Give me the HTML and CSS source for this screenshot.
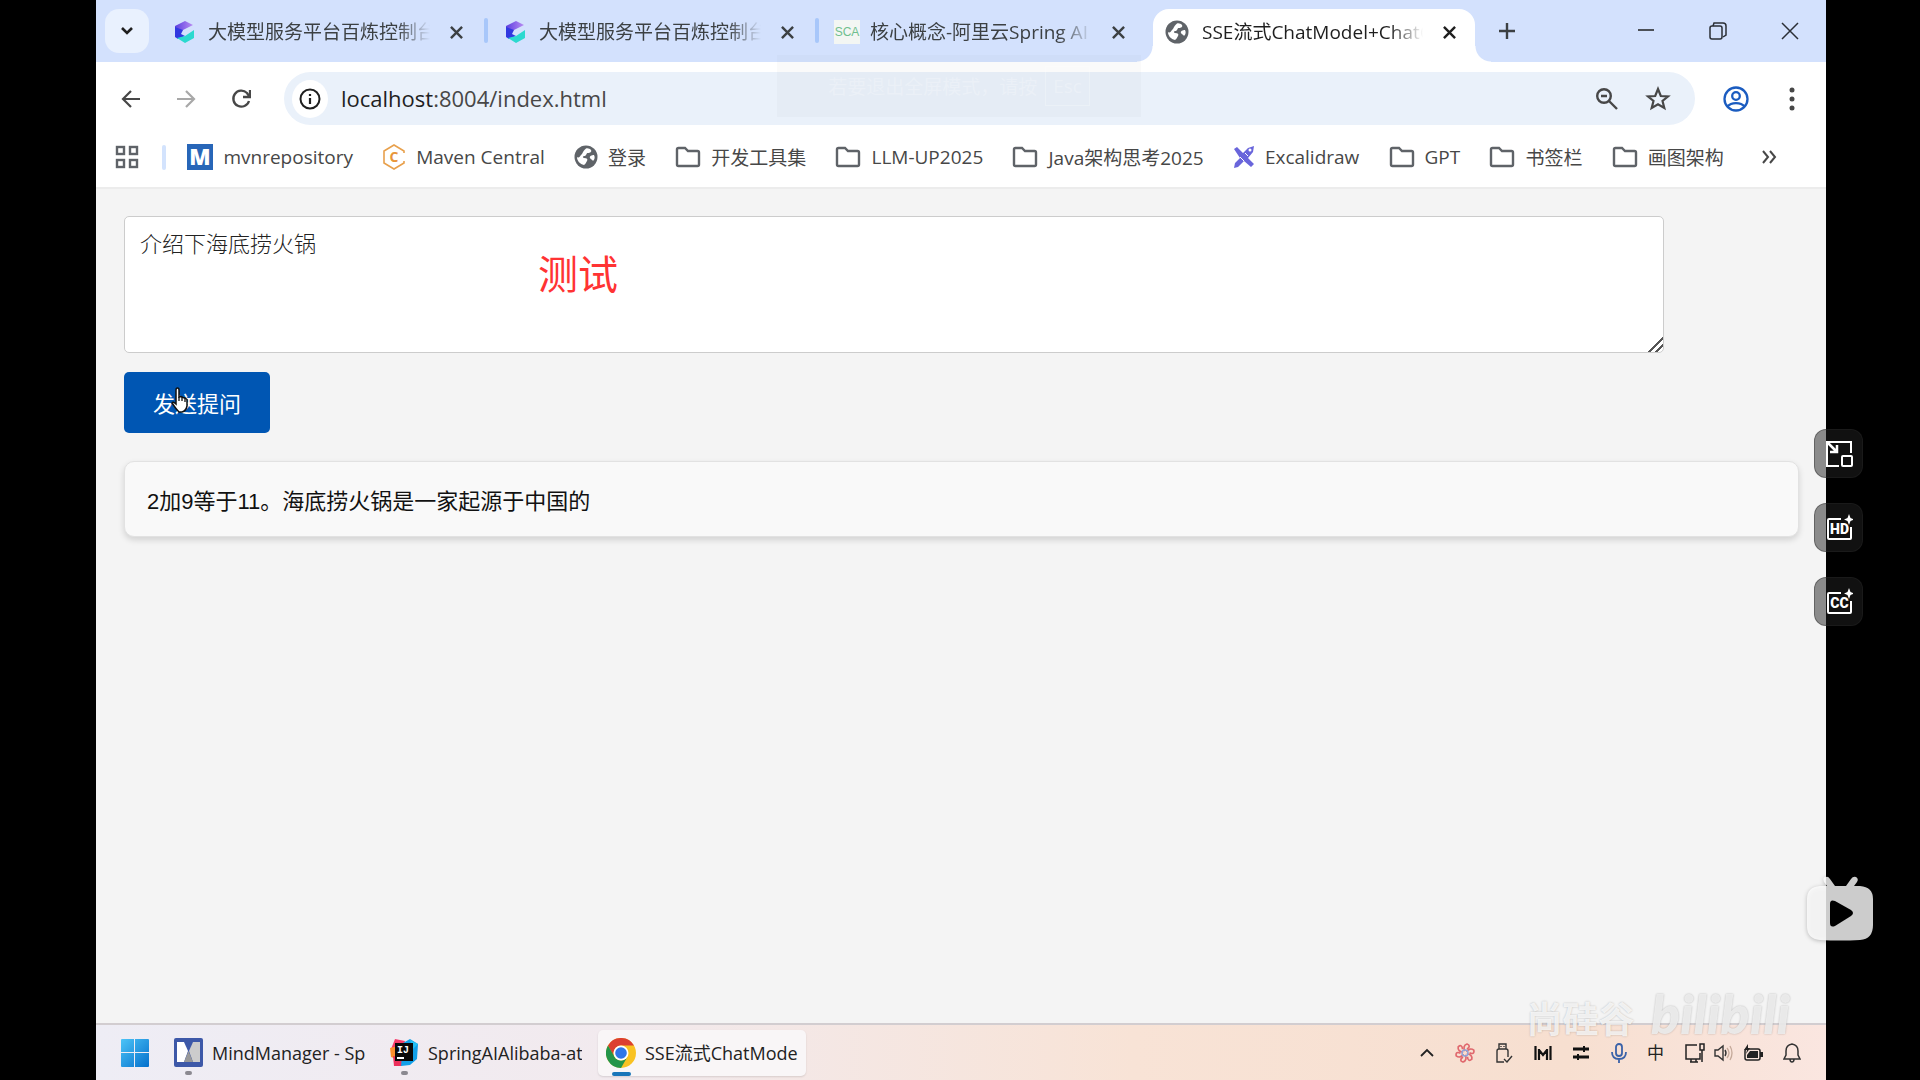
FILE: index.html
```html
<!DOCTYPE html>
<html lang="zh-CN">
<head>
    <meta charset="UTF-8">
    <meta name="viewport" content="width=device-width, initial-scale=1.0">
    <title>SSE流式ChatModel+ChatClient</title>
    <link rel="stylesheet" href="styles.css">
</head>
<body>

    <svg class="defs" aria-hidden="true">
        <defs>
            <linearGradient id="cloudTop" x1="0" y1="0" x2="1" y2="0">
                <stop offset="0" stop-color="#5b3fe0"/>
                <stop offset="1" stop-color="#b98cf2"/>
            </linearGradient>
            <linearGradient id="winBlue" x1="0" y1="0" x2="1" y2="1">
                <stop offset="0" stop-color="#4cc4f7"/>
                <stop offset="1" stop-color="#0470cc"/>
            </linearGradient>
        </defs>
        <symbol id="cloud" viewBox="0 0 20 22">
            <path d="M10 0 18 4 8 9 0 12V5z" fill="url(#cloudTop)"/>
            <path d="M0 6 8 9 6 13 10 15 3 18 0 16z" fill="#3038e0"/>
            <path d="M19 9V17L10 22 2 17 10 15z" fill="#2bd9cf"/>
        </symbol>
        <symbol id="globe" viewBox="0 0 24 24">
            <circle cx="12" cy="12" r="11.500" fill="#5f6368"/>
            <path d="M12 3.500C14 3 16 4 17 5 18 7 16 8 14 8 12 8 13 10 11 11 9 11 8 12 10 13 13 13 14 14 13 16 12 17 12 19 10 20 6 19 3 16 3 12 6 14 6 10 8 9 9 7 10 5 12 3.500z" fill="#fff"/>
            <path d="M20 10C18 10 15 11 16 13 17 15 18 14 19 16 21 14 21 12 20 10z" fill="#fff"/>
        </symbol>
        <symbol id="close" viewBox="0 0 14 14">
            <path d="M1 1 13 13M13 1 1 13" fill="none" stroke="currentColor" stroke-width="2.600"/>
        </symbol>
        <symbol id="folder" viewBox="0 0 26 22">
            <path d="M2 3.500Q2 2 3.500 2H10L13 5H22.500Q24 5 24 6.500V18.500Q24 20 22.500 20H3.500Q2 20 2 18.500z" fill="none" stroke="#5f6368" stroke-width="2.400"/>
        </symbol>
    </svg>

    <div class="screen">

        <header class="tab-strip">
            <button class="tab-search" aria-label="搜索标签页">
                <svg width="14" height="10" viewBox="0 0 14 10"><path d="M2 2 7 7 12 2" fill="none" stroke="#1f1f1f" stroke-width="2.600"/></svg>
            </button>
            <div class="tab">
                <svg class="favicon" width="20" height="22"><use href="#cloud"/></svg>
                <span class="tab-title">大模型服务平台百炼控制台</span>
                <button class="tab-close" aria-label="关闭"><svg width="13" height="13"><use href="#close"/></svg></button>
            </div>
            <div class="tab">
                <svg class="favicon" width="20" height="22"><use href="#cloud"/></svg>
                <span class="tab-title">大模型服务平台百炼控制台</span>
                <button class="tab-close" aria-label="关闭"><svg width="13" height="13"><use href="#close"/></svg></button>
            </div>
            <div class="tab tab-plain">
                <span class="favicon sca">SCA</span>
                <span class="tab-title">核心概念-阿里云Spring AI</span>
                <button class="tab-close" aria-label="关闭"><svg width="13" height="13"><use href="#close"/></svg></button>
            </div>
            <div class="tab tab-active">
                <svg class="favicon" width="24" height="24"><use href="#globe"/></svg>
                <span class="tab-title">SSE流式ChatModel+ChatClient</span>
                <button class="tab-close" aria-label="关闭"><svg width="13" height="13"><use href="#close"/></svg></button>
            </div>
            <button class="new-tab" aria-label="新标签页">
                <svg width="18" height="18" viewBox="0 0 18 18"><path d="M9 1V17M1 9H17" stroke="#3c4043" stroke-width="2.400"/></svg>
            </button>
            <div class="window-controls">
                <button aria-label="最小化"><svg width="18" height="18" viewBox="0 0 18 18"><path d="M1 8H17" stroke="#1f1f1f" stroke-width="1.500"/></svg></button>
                <button aria-label="还原"><svg width="18" height="18" viewBox="0 0 18 18"><g fill="none" stroke="#2b2f36" stroke-width="1.500"><rect x="1" y="4" width="12" height="13" rx="2"/><path d="M4 4 5 1H14Q17 1 17 4V13L14 15"/></g></svg></button>
                <button aria-label="关闭窗口"><svg width="18" height="18" viewBox="0 0 18 18"><path d="M1 1 17 17M17 1 1 17" stroke="#2b2f36" stroke-width="1.500"/></svg></button>
            </div>
        </header>

        <div class="toolbar">
            <button class="nav-button" aria-label="后退"><svg width="20" height="20" viewBox="0 0 20 20"><path d="M19 10H2M10 2 2 10 10 18" fill="none" stroke="#474747" stroke-width="2.200"/></svg></button>
            <button class="nav-button" aria-label="前进"><svg width="20" height="20" viewBox="0 0 20 20"><path d="M1 10H18M10 2 18 10 10 18" fill="none" stroke="#a8a8a8" stroke-width="2.200"/></svg></button>
            <button class="nav-button" aria-label="重新加载"><svg width="20" height="20" viewBox="0 0 20 20"><path d="M18 12A8 8 0 1 1 16 4L18 7" fill="none" stroke="#474747" stroke-width="2.300"/><path d="M19 1V8H12" fill="none" stroke="#474747" stroke-width="2.300"/></svg></button>
            <div class="omnibox">
                <button class="site-info" aria-label="查看网站信息"><svg width="22" height="22" viewBox="0 0 22 22"><circle cx="11" cy="11" r="9.500" fill="none" stroke="#1f1f1f" stroke-width="2"/><path d="M11 10V16M11 6V8" stroke="#1f1f1f" stroke-width="2.200"/></svg></button>
                <a class="url" href="#"><span>localhost</span>:8004/index.html</a>
                <button aria-label="缩放"><svg width="24" height="24" viewBox="0 0 24 24"><g fill="none" stroke="#474747" stroke-width="2.400"><circle cx="9" cy="9" r="6.800"/><path d="M14 14 22 22M6 9H12"/></g></svg></button>
                <button aria-label="为此标签页添加书签"><svg width="26" height="26" viewBox="0 0 26 26"><path d="M13 3 15.800 10 23 10.500 17.500 15 19.300 22 13 18.200 6.700 22 8.500 15 3 10.500 10.200 10z" fill="none" stroke="#474747" stroke-width="2.200"/></svg></button>
            </div>
            <button class="profile" aria-label="个人资料"><svg width="28" height="28" viewBox="0 0 28 28"><g fill="none" stroke="#1b5cc0" stroke-width="2.300"><circle cx="14" cy="14" r="11.500"/><circle cx="14" cy="11" r="3.800"/><path d="M5.500 21.500C9 17 19 17 22.500 21.500"/></g></svg></button>
            <button class="menu" aria-label="菜单"><svg width="6" height="24" viewBox="0 0 6 24"><g fill="#474747"><circle cx="3" cy="3" r="2.500"/><circle cx="3" cy="12" r="2.500"/><circle cx="3" cy="21" r="2.500"/></g></svg></button>
        </div>

        <nav class="bookmarks">
            <button class="apps" aria-label="应用"><svg width="24" height="24" viewBox="0 0 24 24"><g fill="none" stroke="#5f6368" stroke-width="2.400"><rect x="2" y="2" width="7" height="7"/><rect x="15" y="2" width="7" height="7"/><rect x="2" y="15" width="7" height="7"/><rect x="15" y="15" width="7" height="7"/></g></svg></button>
            <span class="divider"></span>
            <a href="#"><svg width="26" height="26" viewBox="0 0 26 26"><rect width="26" height="26" fill="#2866b8"/><text x="13" y="21" class="mvn-letter">M</text></svg>mvnrepository</a>
            <a href="#"><svg width="24" height="26" viewBox="0 0 24 26"><path d="M22 9V7L12 1 2 7V19L12 25 22 19V17" fill="none" stroke="#e8a04c" stroke-width="1.600"/><text x="12" y="18" class="central-letter">C</text></svg>Maven Central</a>
            <a href="#"><svg width="24" height="24"><use href="#globe"/></svg>登录</a>
            <a href="#"><svg width="26" height="22"><use href="#folder"/></svg>开发工具集</a>
            <a href="#"><svg width="26" height="22"><use href="#folder"/></svg>LLM-UP2025</a>
            <a href="#"><svg width="26" height="22"><use href="#folder"/></svg>Java架构思考2025</a>
            <a href="#"><svg width="22" height="22" viewBox="0 0 22 22"><path d="M1 3 4 1 10 7 15 2 21 0 20 6 15 12 21 18 18 21 11 15 5 21 1 22 2 17 7 12z" fill="#6965db"/><circle cx="17" cy="4" r="1.500" fill="#fff"/><path d="M7 11 11 15M12 7 15 10" stroke="#fff" stroke-width="1"/></svg>Excalidraw</a>
            <a href="#"><svg width="26" height="22"><use href="#folder"/></svg>GPT</a>
            <a href="#"><svg width="26" height="22"><use href="#folder"/></svg>书签栏</a>
            <a href="#"><svg width="26" height="22"><use href="#folder"/></svg>画图架构</a>
            <button class="more" aria-label="更多书签"><svg width="16" height="14" viewBox="0 0 16 14"><path d="M2 1 7 7 2 13M9 1 14 7 9 13" fill="none" stroke="#474747" stroke-width="2"/></svg></button>
        </nav>

        <!-- full screen hint, almost faded out -->
        <div class="fullscreen-hint">若要退出全屏模式，请按<kbd>Esc</kbd></div>

        <main class="page">
            <textarea class="question" aria-label="提问">介绍下海底捞火锅</textarea>
            <button class="send-button">发送提问</button>
            <div class="answer">2加9等于11。海底捞火锅是一家起源于中国的</div>

            <span class="danmaku">测试</span>
            <svg class="cursor" width="18" height="26" viewBox="0 0 18 26"><path d="M5 15V3Q5 1 6.500 1 8 1 8 3V10L10 9.500 12 10.500 14 11 16 12.500V19Q15 24 11 25H8Q5 22 1 16 2 14 5 17z" fill="#fff" stroke="#111" stroke-width="1.500"/><path d="M8 10V14M11 10V14M14 11V15" stroke="#111" stroke-width="1.300"/></svg>
        </main>

        <footer class="taskbar">
            <button class="start" aria-label="开始"><svg width="28" height="28" viewBox="0 0 28 28"><path d="M0 1Q0 0 1 0H13V13H0zM14 0H27Q28 0 28 1V13H14zM0 14H13V28H1Q0 28 0 27zM14 14H28V27Q28 28 27 28H14z" fill="url(#winBlue)"/></svg></button>
            <button class="task">
                <svg width="29" height="29" viewBox="0 0 29 29"><rect width="29" height="29" rx="2" fill="#3d58a8"/><path d="M3 4H10L14 13 10 24H3z" fill="#fff"/><path d="M26 4H19L15 13 19 24H26z" fill="#ccc"/><path d="M14.500 13 19 24H10z" fill="#999"/></svg>
                <span class="task-title">MindManager - Sp</span>
            </button>
            <button class="task">
                <svg width="29" height="29" viewBox="0 0 29 29"><path d="M1 11 5 1 15 3 12 15z" fill="#f53d6b"/><path d="M0 10 8 8 9 22 1 19z" fill="#fb8f2e"/><path d="M3 18 12 20 12 28 4 28z" fill="#ec2f5b"/><path d="M13 5 20 1 28 6 27 21 20 27 11 28z" fill="#12a0e8"/><path d="M20 2 28 6 23 11z" fill="#22c0f5"/><rect x="5" y="5" width="18" height="18" fill="#090909"/><text x="7" y="15" class="idea-letter">IJ</text><rect x="7" y="19" width="7" height="2" fill="#fff"/></svg>
                <span class="task-title">SpringAIAlibaba-at</span>
            </button>
            <button class="task task-active">
                <svg width="30" height="30" viewBox="0 0 30 30"><circle cx="15" cy="15" r="15" fill="#f9c222"/><path d="M2 7.500A15 15 0 0 1 28 7.500H15A8 8 0 0 0 8 18.500z" fill="#dc3f31"/><path d="M2 7.500 8.500 18.800A7.500 7.500 0 0 0 21.500 18.800L15 30A15 15 0 0 1 2 7.500z" fill="#24954a"/><circle cx="15" cy="15" r="7.500" fill="#fff"/><circle cx="15" cy="15" r="5.800" fill="#2f76e8"/></svg>
                <span class="task-title">SSE流式ChatMode</span>
            </button>

            <div class="tray">
                <svg width="14" height="20" viewBox="0 0 14 20"><path d="M1 13 7 7 13 13" fill="none" stroke="#222" stroke-width="1.800"/></svg>
                <svg width="20" height="20" viewBox="0 0 20 20"><g fill="none" stroke="#e0696e" stroke-width="1.700"><path id="petal" d="M10 8C8 5 9 2 12 1 15 2 15 4 12 6"/><use href="#petal" transform="rotate(60 10 10)"/><use href="#petal" transform="rotate(120 10 10)"/><use href="#petal" transform="rotate(180 10 10)"/><use href="#petal" transform="rotate(240 10 10)"/><use href="#petal" transform="rotate(300 10 10)"/></g><circle cx="10" cy="10" r="3" fill="none" stroke="#8ea4d8" stroke-width="1.500"/></svg>
                <svg width="18" height="20" viewBox="0 0 18 20"><path d="M4 6V1H11V6M9 19H2V8Q2 6 4 6H11Q13 6 13 8V14M9 16 12 19 17 13M6 3V4M9 3V4" fill="none" stroke="#333" stroke-width="1.400"/></svg>
                <svg width="18" height="16" viewBox="0 0 18 16"><path d="M1.500 1V15M5 4V15M13 4V15M16.500 1V15M5 5 9 10 13 5" fill="none" stroke="#111" stroke-width="2.200"/></svg>
                <svg width="18" height="18" viewBox="0 0 18 18"><path d="M1 5H17M1 13H17" fill="none" stroke="#111" stroke-width="3"/><path d="M12 2V8M6 10V16" stroke="#111" stroke-width="2"/></svg>
                <svg width="16" height="20" viewBox="0 0 16 20"><g fill="none" stroke="#3a62a8" stroke-width="1.800"><rect x="5" y="1" width="6" height="12" rx="3"/><path d="M1 9Q1 16 8 16 15 16 15 9M8 16V20"/></g></svg>
                <span class="ime">中</span>
                <button class="tray-group" aria-label="网络、音量和电池">
                    <svg width="20" height="20" viewBox="0 0 20 20"><path d="M12 2H1V16H15V10M5 19H13M6 16V19M11 16V19M15 1H19V7H15zM17 7V19" fill="none" stroke="#222" stroke-width="1.500"/></svg>
                    <svg width="20" height="20" viewBox="0 0 20 20"><path d="M1 7H4L9 3V17L4 13H1zM11 7Q13 10 11 13" fill="none" stroke="#333" stroke-width="1.400"/><path d="M13 5Q17 10 13 15M16 3Q20 10 16 17" fill="none" stroke="#c4a99a" stroke-width="1.300"/></svg>
                    <svg width="20" height="18" viewBox="0 0 20 18"><rect x="2" y="5" width="15" height="11" rx="2" fill="none" stroke="#222" stroke-width="1.500"/><path d="M7 7H15V14H4V11zM17 8H20V13H17zM5 0 1 6H4L3 10 7 4H5z" fill="#222"/></svg>
                </button>
                <svg width="18" height="20" viewBox="0 0 18 20"><path d="M9 1Q3 2 3 8V12L1 16H17L15 12V8Q15 2 9 1zM7 16Q7 19 9 19 11 19 11 16" fill="none" stroke="#333" stroke-width="1.500"/></svg>
            </div>
        </footer>

        <div class="watermark"><span class="brand">尚硅谷</span><span class="site">bilibili</span></div>
    </div>

    <aside class="player-tools">
        <button aria-label="画中画"><svg width="28" height="28" viewBox="0 0 28 28"><g fill="none" stroke="#fff" stroke-width="2"><path d="M26 13V2H2V26H14"/><rect x="17" y="16" width="10" height="10" rx="1"/><path d="M3 3 11 11M12 5V12H5" stroke-width="2.500"/></g></svg></button>
        <button aria-label="高清"><svg width="28" height="28" viewBox="0 0 28 28"><path d="M16 5H4Q3 5 3 6V24Q3 25 4 25H25Q26 25 26 24V13" fill="none" stroke="#fff" stroke-width="2"/><path d="M24 0 25.500 4 29 5.500 25.500 7 24 11 22.500 7 19 5.500 22.500 4z" fill="#fff"/><text x="14.500" y="20" class="tool-letter">HD</text></svg></button>
        <button aria-label="字幕"><svg width="28" height="28" viewBox="0 0 28 28"><path d="M16 5H4Q3 5 3 6V24Q3 25 4 25H25Q26 25 26 24V13" fill="none" stroke="#fff" stroke-width="2"/><path d="M24 0 25.500 4 29 5.500 25.500 7 24 11 22.500 7 19 5.500 22.500 4z" fill="#fff"/><text x="14.500" y="20" class="tool-letter">CC</text></svg></button>
    </aside>
    <button class="play-button" aria-label="播放">
        <svg width="68" height="66" viewBox="0 0 68 66"><path d="M18 6Q16 1 20 1 22 0 24 3L29 10H40L45 3Q47 0 50 1 53 3 51 6L48 10H54Q67 11 67 23V49Q67 63 54 64 34 65 14 64 1 63 1 50V23Q1 11 14 10H21z" fill="#fff" fill-opacity="0.800"/><path d="M24 28Q24 23 29 25L45 34Q49 37 45 40L29 50Q24 52 24 47z" fill="#000"/></svg>
    </button>

</body>
</html>
```
FILE: styles.css
```css
* {
    box-sizing: border-box;
}

body {
    position: relative;
    margin: 0;
    padding: 0 94px 0 96px;
    background-color: #000;
    font-family: "Open Sans", "Noto Sans CJK SC", sans-serif;
    overflow: hidden;
}

button {
    border: none;
    background: none;
    padding: 0;
    font-family: inherit;
    cursor: pointer;
}

svg {
    display: block;
    flex-shrink: 0;
}

.defs {
    position: absolute;
    width: 0;
    height: 0;
}

.screen {
    position: relative;
    display: flex;
    flex-direction: column;
    height: 100vh;
    background-color: #f4f4f4;
}

/* tabs */
.tab-strip {
    display: flex;
    align-items: stretch;
    height: 62px;
    padding: 9px 0 0 9px;
    background-color: #d3e1fd;
}

.tab-search {
    display: flex;
    align-items: center;
    justify-content: center;
    width: 44px;
    height: 44px;
    margin-right: 6px;
    border-radius: 14px;
    background-color: #e9f1fe;
}

.tab {
    position: relative;
    display: flex;
    align-items: center;
    width: 331px;
    padding: 0 23px 7px 17px;
    color: #3c4043;
    font-size: 19px;
}

.tab::after {
    content: "";
    position: absolute;
    right: -2px;
    top: 9px;
    width: 4px;
    height: 25px;
    border-radius: 2px;
    background-color: #a8c7fa;
}

.tab-plain::after {
    display: none;
}

.favicon {
    width: 26px;
    margin-right: 10px;
}

.sca {
    height: 24px;
    background-color: #f3f6f3;
    color: #6fbf8f;
    font-family: "Liberation Sans", sans-serif;
    font-size: 12px;
    line-height: 24px;
    text-align: center;
}

.tab-title {
    flex: 1;
    overflow: hidden;
    white-space: nowrap;
    line-height: 26px;
    mask-image: linear-gradient(to right, #000 85%, transparent);
}

.tab-close {
    margin-left: 20px;
    color: #3c4043;
}

.tab-active {
    width: 322px;
    margin-left: 5px;
    padding-left: 11px;
    padding-right: 19px;
    border-radius: 16px 16px 0 0;
    background-color: #fff;
    color: #1f1f1f;
}

.tab-active .favicon {
    margin-right: 12px;
}

.tab-active .tab-close {
    color: #1f1f1f;
}

.tab-active::before,
.tab-active::after {
    content: "";
    position: absolute;
    top: auto;
    bottom: 0;
    width: 16px;
    height: 16px;
    border-radius: 0;
}

.tab-active::before {
    left: -16px;
    background: radial-gradient(circle at 0 0, transparent 15px, #fff 16px);
}

.tab-active::after {
    right: -16px;
    background: radial-gradient(circle at 100% 0, transparent 15px, #fff 16px);
}

.new-tab {
    height: 44px;
    margin-left: 23px;
}

.window-controls {
    display: flex;
    align-items: center;
    gap: 54px;
    height: 44px;
    margin-left: auto;
    padding-right: 27px;
}

/* address bar */
.toolbar {
    display: flex;
    align-items: center;
    height: 73px;
    padding: 0 31px 0 25px;
    background-color: #fff;
}

.nav-button {
    margin-right: 35px;
}

.omnibox {
    display: flex;
    flex: 1;
    align-items: center;
    gap: 26px;
    height: 53px;
    margin-left: -2px;
    padding: 0 24px 0 8px;
    border-radius: 27px;
    background-color: #eaf1fa;
}

.site-info {
    display: flex;
    align-items: center;
    justify-content: center;
    width: 36px;
    height: 38px;
    margin-right: -13px;
    border-radius: 50%;
    background-color: #fff;
}

.url {
    flex: 1;
    padding-bottom: 2px;
    color: #474747;
    font-size: 22px;
    text-decoration: none;
}

.url span {
    color: #1f1f1f;
}

.profile {
    margin-left: 27px;
    margin-right: 39px;
}

/* bookmarks */
.bookmarks {
    display: flex;
    align-items: center;
    justify-content: space-between;
    height: 54px;
    padding: 0 49px 8px 19px;
    border-bottom: 2px solid #ececec;
    background-color: #fff;
}

.bookmarks a {
    display: flex;
    align-items: center;
    gap: 10px;
    color: #474747;
    font-size: 19px;
    white-space: nowrap;
    text-decoration: none;
}

.divider {
    width: 4px;
    height: 25px;
    margin-left: -6px;
    margin-right: -8px;
    border-radius: 2px;
    background-color: #d3e3fd;
}

.more {
    margin-left: 8px;
}

.mvn-letter {
    fill: #fff;
    font-size: 22px;
    font-weight: 800;
    text-anchor: middle;
}

.central-letter {
    fill: #e8963a;
    font-size: 14px;
    font-weight: 700;
    text-anchor: middle;
}

.fullscreen-hint {
    position: absolute;
    top: 55px;
    left: 681px;
    display: flex;
    align-items: center;
    justify-content: center;
    gap: 8px;
    width: 364px;
    height: 62px;
    background-color: rgba(140, 140, 120, 0.04);
    color: rgba(255, 255, 255, 0.25);
    font-size: 19px;
    pointer-events: none;
}

.fullscreen-hint kbd {
    padding: 6px 7px;
    border: 1px solid rgba(255, 255, 255, 0.25);
    font-family: inherit;
}

/* page */
.page {
    position: relative;
    flex: 1;
    padding: 27px 27px 0 28px;
    font-family: "Liberation Sans", "Noto Sans CJK SC", sans-serif;
    font-size: 22px;
}

.question {
    display: block;
    box-sizing: content-box;
    width: 90%;
    height: 105px;
    padding: 15px;
    border: 1px solid #ccc;
    border-radius: 5px;
    background-color: #fff;
    color: #222;
    font-family: "Liberation Serif", "Noto Sans CJK SC", serif;
    font-size: 22px;
    font-weight: 300;
    line-height: 26px;
    outline: none;
}

.question::-webkit-resizer {
    background: linear-gradient(135deg, transparent 47%, #555 47%, #555 57%, transparent 57%, transparent 72%, #555 72%, #555 82%, transparent 82%);
}

.send-button {
    display: block;
    margin-top: 19px;
    padding: 17px 29px 13px;
    border-radius: 5px;
    background-color: #0056b3;
    color: #fff;
    font-size: 22px;
    line-height: 31px;
}

.answer {
    margin-top: 28px;
    padding: 25px 22px 19px;
    border: 1px solid #e2e2e2;
    border-radius: 10px;
    background-color: #f9f9f9;
    box-shadow: 0 3px 6px rgba(0, 0, 0, 0.14);
    color: #111;
    line-height: 30px;
}

.danmaku {
    position: absolute;
    top: 56px;
    left: 442px;
    color: #ff3333;
    font-size: 40px;
    line-height: 60px;
}

.cursor {
    position: absolute;
    top: 198px;
    left: 75px;
}

/* taskbar */
.taskbar {
    display: flex;
    align-items: center;
    height: 57px;
    padding: 0 25px;
    border-top: 2px solid #d2cdd0;
    background: linear-gradient(to right, #eeedf5, #f2eaee 30%, #f8e3d6 60%, #f7dfd0 85%, #fae6e0);
}

.start {
    margin-right: 17px;
}

.task {
    position: relative;
    display: flex;
    align-items: center;
    gap: 9px;
    width: 208px;
    height: 46px;
    padding: 0 8px;
    border-radius: 5px;
    color: #222;
    font-size: 18px;
    text-align: left;
}

.task + .task {
    margin-left: 8px;
}

.task-title {
    width: 154px;
    overflow: hidden;
    white-space: nowrap;
    line-height: 26px;
}

.task::after {
    content: "";
    position: absolute;
    left: 19px;
    bottom: 1px;
    width: 7px;
    height: 4px;
    border-radius: 2px;
    background-color: #8b8990;
}

.task-active {
    background-color: #f9f6f7;
    box-shadow: 0 1px 2px rgba(0, 0, 0, 0.12);
}

.task-active::after {
    left: 14px;
    bottom: 0;
    width: 19px;
    background-color: #1a76b9;
}

.idea-letter {
    fill: #fff;
    font-family: "Liberation Mono", monospace;
    font-size: 10px;
    font-weight: 700;
}

.tray {
    display: flex;
    align-items: center;
    justify-content: space-between;
    width: 381px;
    margin-left: auto;
}

.tray-group {
    display: flex;
    align-items: center;
    gap: 9px;
}

.ime {
    color: #222;
    font-size: 17px;
    line-height: 20px;
}

.watermark {
    position: absolute;
    right: 36px;
    bottom: 36px;
    display: flex;
    align-items: flex-end;
    gap: 16px;
    color: rgba(255, 255, 255, 0.8);
    text-shadow: 0 0 2px rgba(0, 0, 0, 0.25);
    pointer-events: none;
}

.brand {
    font-size: 36px;
    font-weight: 700;
    line-height: 48px;
}

.site {
    color: rgba(238, 238, 238, 0.9);
    font-family: Lato, sans-serif;
    font-size: 54px;
    font-style: italic;
    font-weight: 900;
    line-height: 60px;
}

/* video player overlay */
.player-tools {
    position: absolute;
    top: 429px;
    right: 57px;
    display: flex;
    flex-direction: column;
    gap: 25px;
}

.player-tools button {
    display: flex;
    align-items: center;
    justify-content: center;
    width: 49px;
    height: 49px;
    border: 1px solid rgba(40, 40, 40, 0.4);
    border-radius: 12px;
    background-color: rgba(34, 34, 34, 0.5);
}

.tool-letter {
    fill: #fff;
    font-family: Roboto, sans-serif;
    font-size: 14px;
    font-weight: 900;
    text-anchor: middle;
}

.play-button {
    position: absolute;
    top: 876px;
    right: 46px;
    filter: drop-shadow(0 1px 2px rgba(0, 0, 0, 0.3));
}
```
